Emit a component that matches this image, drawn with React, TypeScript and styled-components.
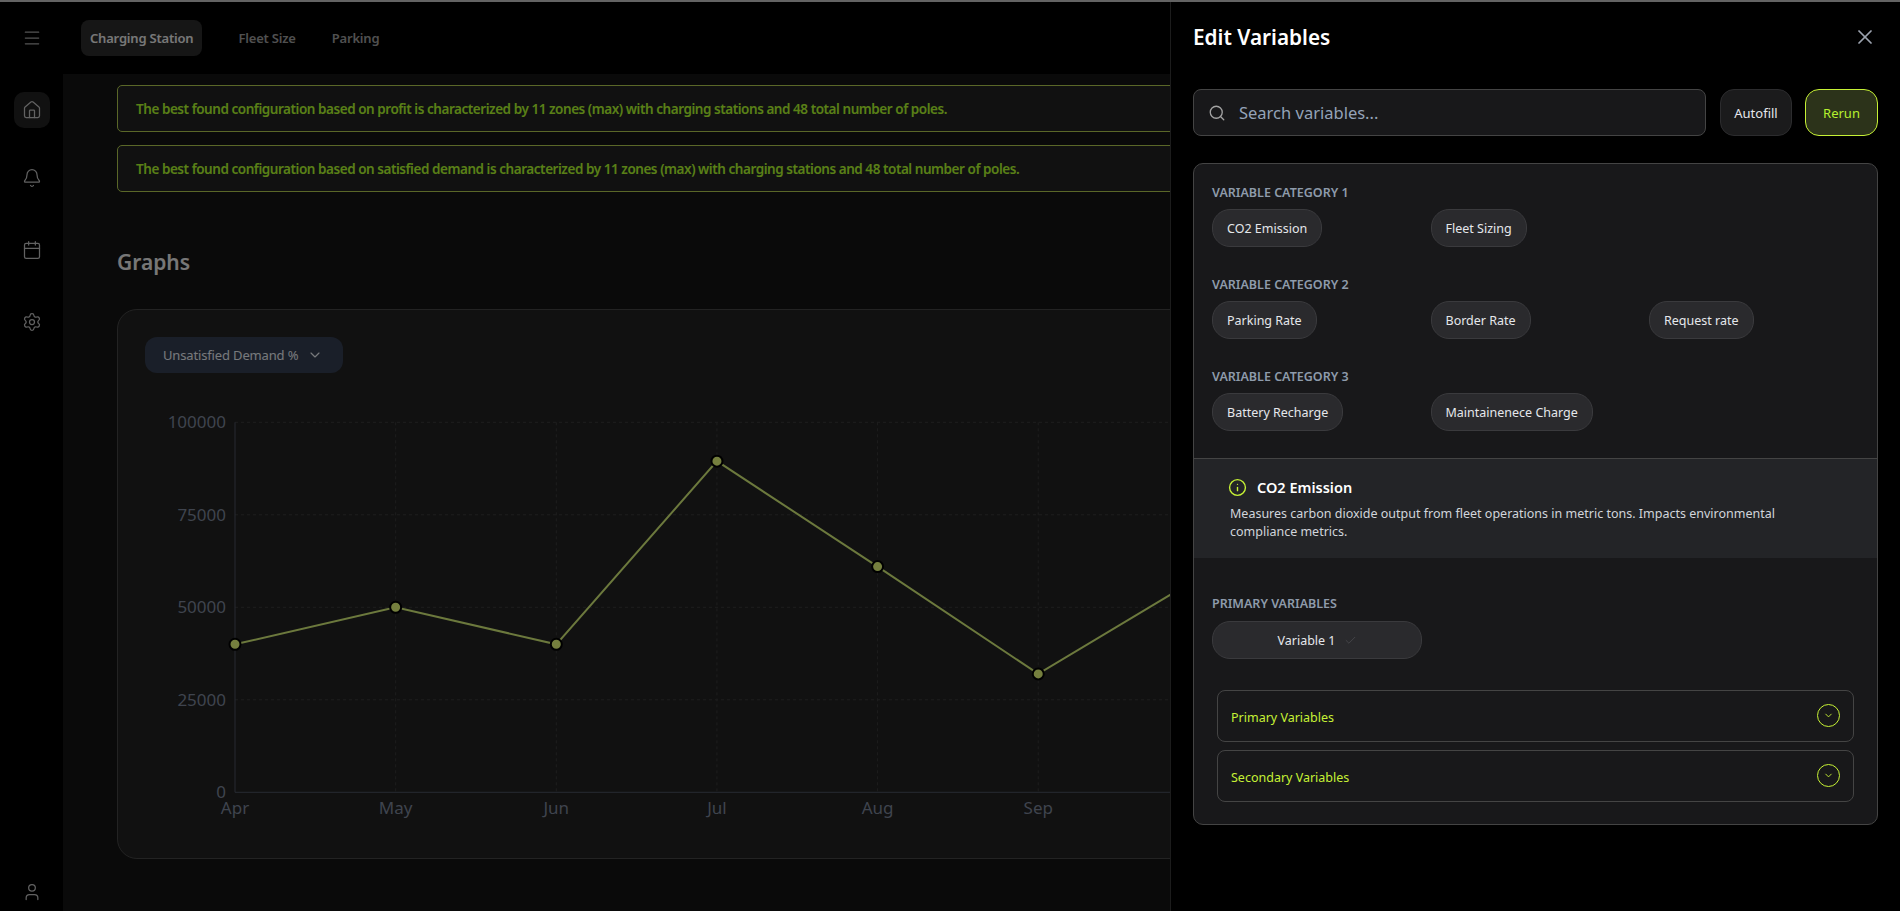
import React from 'react';
import styled, { createGlobalStyle } from 'styled-components';
import {
  Bell,
  Calendar,
  Check,
  ChevronDown,
  Home,
  Info,
  Menu,
  Search,
  Settings,
  User,
  X,
} from 'lucide-react';

const tabs = ['Charging Station', 'Fleet Size', 'Parking'];

const alerts = [
  'The best found configuration based on profit is characterized by 11 zones (max) with charging stations and 48 total number of poles.',
  'The best found configuration based on satisfied demand is characterized by 11 zones (max) with charging stations and 48 total number of poles.',
];

const categories = [
  { title: 'VARIABLE CATEGORY 1', items: ['CO2 Emission', 'Fleet Sizing'] },
  { title: 'VARIABLE CATEGORY 2', items: ['Parking Rate', 'Border Rate', 'Request rate'] },
  { title: 'VARIABLE CATEGORY 3', items: ['Battery Recharge', 'Maintainenece Charge'] },
];

const points = [
  { month: 'Apr', value: 40000 },
  { month: 'May', value: 50000 },
  { month: 'Jun', value: 40000 },
  { month: 'Jul', value: 89500 },
  { month: 'Aug', value: 61000 },
  { month: 'Sep', value: 32000 },
  { month: 'Oct', value: 58000 },
];

const ticks = [0, 25000, 50000, 75000, 100000];

const CHART_LEFT = 90;
const CHART_TOP = 17.3;
const CHART_BOTTOM = 387.3;
const CHART_RIGHT = 1673;
const MONTH_STEP = 160.65;

const xAt = (i: number) => CHART_LEFT + i * MONTH_STEP;
const yAt = (v: number) => CHART_BOTTOM - (v / 100000) * (CHART_BOTTOM - CHART_TOP);

function LineChart() {
  const line = points.map((p, i) => `${xAt(i)},${yAt(p.value)}`).join(' ');
  return (
    <ChartSvg width={1673} height={426}>
      {ticks.slice(1).map((t) => (
        <line key={t} x1={CHART_LEFT} x2={CHART_RIGHT} y1={yAt(t)} y2={yAt(t)} stroke="#3c3c3c" strokeDasharray="3 3" />
      ))}
      {points.map((p, i) =>
        i === 0 ? null : (
          <line key={p.month} x1={xAt(i)} x2={xAt(i)} y1={CHART_TOP} y2={CHART_BOTTOM} stroke="#3c3c3c" strokeDasharray="3 3" />
        ),
      )}
      <line x1={CHART_LEFT} x2={CHART_LEFT} y1={CHART_TOP} y2={CHART_BOTTOM} stroke="#4e5564" />
      <line x1={CHART_LEFT} x2={CHART_RIGHT} y1={CHART_BOTTOM} y2={CHART_BOTTOM} stroke="#4e5564" />
      {ticks.map((t) => (
        <AxisText key={t} x={CHART_LEFT - 9} y={yAt(t) + 6} textAnchor="end">
          {t}
        </AxisText>
      ))}
      {points.map((p, i) => (
        <AxisText key={p.month} x={xAt(i)} y={CHART_BOTTOM + 22} textAnchor="middle">
          {p.month}
        </AxisText>
      ))}
      <polyline points={line} fill="none" stroke="#d8f27a" strokeWidth={2} />
      {points.map((p, i) => (
        <circle key={p.month} cx={xAt(i)} cy={yAt(p.value)} r={5.5} fill="#eaff7c" stroke="#000" strokeWidth={2} />
      ))}
    </ChartSvg>
  );
}

function EditVariables() {
  return (
    <Drawer>
      <DrawerHeader>
        <DrawerTitle>Edit Variables</DrawerTitle>
        <CloseButton>
          <X size={24} strokeWidth={1.75} />
        </CloseButton>
      </DrawerHeader>
      <SearchRow>
        <SearchBox>
          <Search size={18} strokeWidth={1.75} color="#a3a3a3" />
          <SearchInput placeholder="Search variables..." readOnly />
        </SearchBox>
        <ActionButton>Autofill</ActionButton>
        <ActionButton $primary>Rerun</ActionButton>
      </SearchRow>
      <VariablesCard>
        <Categories>
          {categories.map((c) => (
            <div key={c.title}>
              <SectionLabel>{c.title}</SectionLabel>
              <ChipGrid>
                {c.items.map((item) => (
                  <Chip key={item}>{item}</Chip>
                ))}
              </ChipGrid>
            </div>
          ))}
        </Categories>
        <InfoBlock>
          <InfoTitle>
            <Info size={19} strokeWidth={1.75} color="#c6f135" />
            CO2 Emission
          </InfoTitle>
          <InfoText>
            Measures carbon dioxide output from fleet operations in metric tons. Impacts environmental compliance
            metrics.
          </InfoText>
        </InfoBlock>
        <PrimarySection>
          <SectionLabel>PRIMARY VARIABLES</SectionLabel>
          <SelectedChip>
            Variable 1
            <Check size={13} strokeWidth={1.5} color="#4a4a4d" />
          </SelectedChip>
        </PrimarySection>
        <Accordions>
          <AccordionRow>
            <AccordionLabel>Primary Variables</AccordionLabel>
            <CircleIcon>
              <ChevronDown size={11} strokeWidth={2} />
            </CircleIcon>
          </AccordionRow>
          <AccordionRow>
            <AccordionLabel>Secondary Variables</AccordionLabel>
            <CircleIcon>
              <ChevronDown size={11} strokeWidth={2} />
            </CircleIcon>
          </AccordionRow>
        </Accordions>
      </VariablesCard>
    </Drawer>
  );
}

export default function App() {
  return (
    <>
      <GlobalStyle />
      <Page>
        <TopLine />
        <Frame>
          <Sidebar>
            <MenuCell>
              <Menu size={20} strokeWidth={1.5} color="#a8a8a8" />
            </MenuCell>
            <SideNav>
              <SideItem $active>
                <Home size={20} strokeWidth={1.5} />
              </SideItem>
              <SideItem>
                <Bell size={20} strokeWidth={1.5} />
              </SideItem>
              <SideItem>
                <Calendar size={20} strokeWidth={1.5} />
              </SideItem>
              <SideItem>
                <Settings size={20} strokeWidth={1.5} />
              </SideItem>
            </SideNav>
            <UserCell>
              <User size={20} strokeWidth={1.5} />
            </UserCell>
          </Sidebar>
          <Column>
            <TopBar>
              {tabs.map((t, i) => (
                <Tab key={t} $active={i === 0}>
                  {t}
                </Tab>
              ))}
            </TopBar>
            <Main>
              <Alerts>
                {alerts.map((a) => (
                  <Alert key={a}>{a}</Alert>
                ))}
              </Alerts>
              <Heading>Graphs</Heading>
              <GraphCard>
                <Dropdown>
                  Unsatisfied Demand %
                  <ChevronDown size={16} strokeWidth={1.75} />
                </Dropdown>
                <LineChart />
              </GraphCard>
            </Main>
          </Column>
          <Overlay />
          <EditVariables />
        </Frame>
      </Page>
    </>
  );
}

const GlobalStyle = createGlobalStyle`
  html, body {
    margin: 0;
    height: 100%;
    overflow: hidden;
    background: #000;
    font-family: 'Noto Sans', 'Open Sans', sans-serif;
  }
  * {
    box-sizing: border-box;
  }
`;

const Page = styled.div`
  display: flex;
  flex-direction: column;
  height: 911px;
`;
const TopLine = styled.div`
  height: 2px;
  flex: none;
  background: #636363;
`;
const Frame = styled.div`
  position: relative;
  display: flex;
  flex: 1;
  min-height: 0;
  overflow: hidden;
`;
const Sidebar = styled.aside`
  width: 63px;
  flex: none;
  display: flex;
  flex-direction: column;
  align-items: center;
  background: #000;
  color: #c4c4c4;
`;
const MenuCell = styled.div`
  height: 72px;
  flex: none;
  display: flex;
  align-items: center;
`;
const SideNav = styled.nav`
  margin-top: 18px;
  display: flex;
  flex-direction: column;
  gap: 36px;
`;
const SideItem = styled.div<{ $active?: boolean }>`
  width: 36px;
  height: 36px;
  display: flex;
  align-items: center;
  justify-content: center;
  border-radius: 10px;
  background: ${(p) => (p.$active ? '#222' : 'transparent')};
  margin-bottom: ${(p) => (p.$active ? '-4px' : '0')};
`;
const UserCell = styled.div`
  margin-top: auto;
  padding-bottom: 9px;
  line-height: 0;
`;
const Column = styled.div`
  flex: 1;
  min-width: 0;
  display: flex;
  flex-direction: column;
`;
const TopBar = styled.header`
  height: 72px;
  flex: none;
  display: flex;
  align-items: center;
  padding-left: 18px;
  gap: 18px;
  background: #000;
`;
const Tab = styled.div<{ $active?: boolean }>`
  height: 36px;
  display: flex;
  align-items: center;
  padding: 0 9px;
  margin-right: ${(p) => (p.$active ? '9px' : '0')};
  border-radius: 8px;
  font-size: 13px;
  font-weight: 600;
  letter-spacing: -0.2px;
  color: ${(p) => (p.$active ? '#f0f0f0' : '#a0a0a0')};
  background: ${(p) => (p.$active ? '#2c2c2c' : 'transparent')};
`;
const Main = styled.main`
  flex: 1;
  min-height: 0;
  padding: 11px 54px 0;
  background: #141414;
`;
const Alerts = styled.div`
  display: flex;
  flex-direction: column;
  gap: 13px;
`;
const Alert = styled.div`
  height: 47px;
  display: flex;
  align-items: center;
  padding: 0 18px;
  border: 1px solid #b4cf50;
  border-radius: 5px;
  background: #222;
  font-size: 13.5px;
  font-weight: 600;
  letter-spacing: -0.45px;
  color: #b4ff2e;
`;
const Heading = styled.h2`
  margin: 54px 0 31px;
  font-size: 21px;
  line-height: 32px;
  font-weight: 600;
  color: #efefef;
`;
const GraphCard = styled.section`
  height: 550px;
  padding: 27px;
  border: 1px solid #464646;
  border-radius: 20px;
  background: #222;
`;
const Dropdown = styled.div`
  width: 198px;
  height: 36px;
  display: flex;
  align-items: center;
  justify-content: space-between;
  padding: 0 20px 0 18px;
  border-radius: 12px;
  background: #343e52;
  font-size: 13px;
  letter-spacing: -0.15px;
  color: #eef2f8;
`;
const ChartSvg = styled.svg`
  display: block;
  margin-top: 32px;
`;
const AxisText = styled.text`
  font-family: 'Noto Sans', 'Open Sans', sans-serif;
  font-size: 17px;
  fill: #7e889c;
`;
const Overlay = styled.div`
  position: absolute;
  inset: 0;
  background: rgba(0, 0, 0, 0.5);
`;
const Drawer = styled.aside`
  position: absolute;
  top: 0;
  right: 0;
  bottom: 0;
  width: 730px;
  padding: 0 22px;
  background: #000;
  border-left: 1px solid #1c1c1c;
`;
const DrawerHeader = styled.div`
  height: 69px;
  display: flex;
  align-items: center;
  justify-content: space-between;
`;
const DrawerTitle = styled.h2`
  margin: 0;
  font-size: 20.75px;
  font-weight: 600;
  color: #fff;
`;
const CloseButton = styled.div`
  margin-right: 1px;
  line-height: 0;
  color: #9ca3af;
`;
const SearchRow = styled.div`
  margin-top: 18px;
  display: flex;
  gap: 13px;
`;
const SearchBox = styled.div`
  flex: 1;
  height: 47px;
  margin-right: 1px;
  display: flex;
  align-items: center;
  gap: 13px;
  padding: 0 14px;
  border: 1px solid #444;
  border-radius: 8px;
  background: #18181a;
`;
const SearchInput = styled.input`
  flex: 1;
  border: 0;
  outline: 0;
  padding: 0;
  background: transparent;
  font-family: inherit;
  font-size: 16.5px;
  color: #fff;
  &::placeholder {
    color: #94a3b8;
    opacity: 1;
  }
`;
const ActionButton = styled.div<{ $primary?: boolean }>`
  width: ${(p) => (p.$primary ? '73px' : '72px')};
  height: 47px;
  flex: none;
  display: flex;
  align-items: center;
  justify-content: center;
  border-radius: 14px;
  border: 1px solid ${(p) => (p.$primary ? '#c6f135' : '#2c2c2e')};
  background: ${(p) => (p.$primary ? '#2c331a' : '#1b1b1c')};
  font-size: 13px;
  color: ${(p) => (p.$primary ? '#b6f02e' : '#e5e7eb')};
`;
const VariablesCard = styled.section`
  margin-top: 27px;
  height: 662px;
  border: 1px solid #444;
  border-radius: 10px;
  background: #18181a;
  overflow: hidden;
`;
const Categories = styled.div`
  height: 294px;
  padding: 19px 18px 0;
  display: flex;
  flex-direction: column;
  gap: 28px;
`;
const SectionLabel = styled.div`
  height: 19px;
  line-height: 19px;
  font-size: 12.5px;
  font-weight: 600;
  color: #8e9bab;
`;
const ChipGrid = styled.div`
  margin-top: 7px;
  display: grid;
  grid-template-columns: repeat(3, 218.5px);
  justify-items: start;
`;
const Chip = styled.div`
  height: 38px;
  display: flex;
  align-items: center;
  padding: 0 14px;
  border: 1px solid #3a3a3d;
  border-radius: 18px;
  background: #2a2a2d;
  font-size: 12.5px;
  color: #e5e7eb;
`;
const InfoBlock = styled.div`
  height: 100px;
  padding: 18px 36px 0 36px;
  border-top: 1px solid #444;
  background: #232427;
`;
const InfoTitle = styled.div`
  display: flex;
  align-items: center;
  gap: 10px;
  margin-left: -2px;
  font-size: 14.5px;
  font-weight: 600;
  line-height: 20px;
  color: #fff;
`;
const InfoText = styled.p`
  margin: 8px 0 0;
  font-size: 12.5px;
  line-height: 18px;
  color: #d1d5db;
`;
const PrimarySection = styled.div`
  padding: 36px 18px 0;
`;
const SelectedChip = styled(Chip)`
  margin-top: 8px;
  width: 210px;
  justify-content: center;
  gap: 8px;
`;
const Accordions = styled.div`
  margin-top: 31px;
  padding: 0 23px;
  display: flex;
  flex-direction: column;
  gap: 8.5px;
`;
const AccordionRow = styled.div`
  height: 51.5px;
  display: flex;
  align-items: center;
  justify-content: space-between;
  padding: 0 13px;
  border: 1px solid #444;
  border-radius: 8px;
  font-size: 12.5px;
  color: #c6f135;
`;
const AccordionLabel = styled.span`
  padding-top: 3px;
`;
const CircleIcon = styled.span`
  width: 23px;
  height: 23px;
  display: flex;
  align-items: center;
  justify-content: center;
  border: 1px solid #c6f135;
  border-radius: 50%;
`;
